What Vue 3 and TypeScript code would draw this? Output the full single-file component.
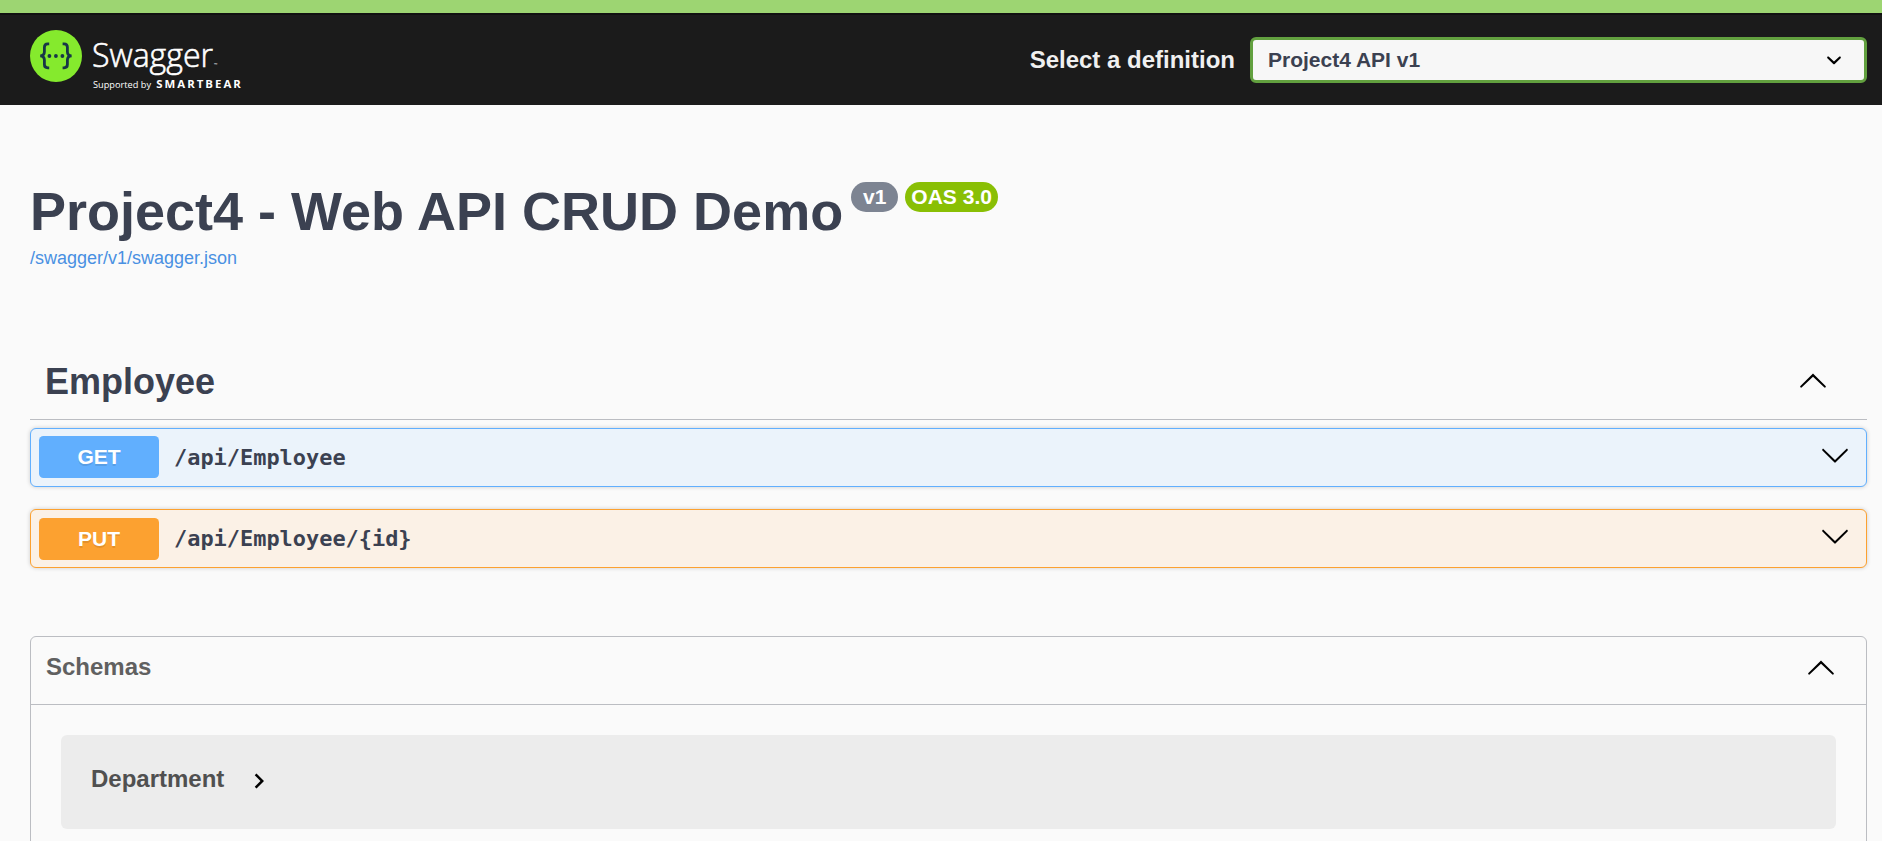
<script setup lang="ts">
import { ref } from 'vue'

interface Operation {
  method: string
  path: string
}

const operations: Operation[] = [
  { method: 'GET', path: '/api/Employee' },
  { method: 'PUT', path: '/api/Employee/{id}' },
]
const schemas: string[] = ['Department']
const definition = ref('Project4 API v1')

const arrowUp =
  'M17.418 14.908c.272.268.709.268.979 0s.271-.701 0-.969l-7.908-7.83c-.27-.268-.707-.268-.979 0l-7.908 7.83c-.27.268-.27.701 0 .969s.709.268.979 0L10 7.767z'
const arrowDown =
  'M17.418 6.109c.272-.268.709-.268.979 0s.271.701 0 .969l-7.908 7.83c-.27.268-.707.268-.979 0l-7.908-7.83c-.27-.268-.27-.701 0-.969s.709-.268.979 0L10 13.25z'
</script>

<template>
  <div class="page">
    <div class="accent"></div>
    <header class="topbar">
      <svg class="logo" viewBox="0 0 214 64" width="214" height="64">
        <circle cx="26" cy="26" r="26" fill="#85ea2d" />
        <g fill="none" stroke="#173647" stroke-width="2.8">
          <path d="M19.2 13.9h-1.4q-3.4 0-3.4 3.3v4.6q0 4-4.2 4.1q4.2.2 4.2 4.2v4.5q0 3.2 3.4 3.2h1.4" />
          <path d="M32.6 13.9h1.4q3.4 0 3.4 3.3v4.6q0 4 4.2 4.1q-4.2.2-4.2 4.2v4.5q0 3.2-3.4 3.2h-1.4" />
        </g>
        <g fill="#173647">
          <circle cx="19.4" cy="26" r="1.9" />
          <circle cx="25.9" cy="26" r="1.9" />
          <circle cx="32.4" cy="26" r="1.9" />
        </g>
        <g fill="#fff">
          <text class="logo-name" x="62" y="36.8" textLength="121" lengthAdjust="spacingAndGlyphs">Swagger</text>
          <text class="logo-tm" x="184" y="36.3">™</text>
          <text class="logo-by" x="63" y="57.5" textLength="58" lengthAdjust="spacing">Supported by</text>
          <text class="logo-brand" x="126.3" y="57.5" textLength="84.5" lengthAdjust="spacing">SMARTBEAR</text>
        </g>
      </svg>
      <label class="picker">
        <span class="picker-label">Select a definition</span>
        <span class="select">
          <span>{{ definition }}</span>
          <svg viewBox="0 0 20 20" width="30" height="30">
            <path d="M13.418 7.859c.271-.268.709-.268.978 0 .27.268.272.701 0 .969l-3.908 3.83c-.27.268-.707.268-.979 0l-3.908-3.83c-.27-.267-.27-.701 0-.969.271-.268.709-.268.978 0L10 11z" />
          </svg>
        </span>
      </label>
    </header>

    <main class="content">
      <section class="info">
        <div class="title-row">
          <h1>Project4 - Web API CRUD Demo</h1>
          <span class="badge version">v1</span>
          <span class="badge oas">OAS 3.0</span>
        </div>
        <a class="spec-link">/swagger/v1/swagger.json</a>
      </section>

      <section class="tag">
        <h2>Employee</h2>
        <svg viewBox="0 0 20 20" width="30" height="30"><path :d="arrowUp" /></svg>
      </section>

      <div v-for="op in operations" :key="op.path" class="operation" :class="op.method.toLowerCase()">
        <span class="method">{{ op.method }}</span>
        <span class="path">{{ op.path }}</span>
        <svg viewBox="0 0 20 20" width="30" height="30"><path :d="arrowDown" /></svg>
      </div>

      <section class="models">
        <div class="models-head">
          <h4>Schemas</h4>
          <svg viewBox="0 0 20 20" width="30" height="30"><path :d="arrowUp" /></svg>
        </div>
        <div v-for="name in schemas" :key="name" class="model">
          <span>{{ name }}</span>
          <svg viewBox="0 0 24 24" width="30" height="30">
            <path d="M10 6L8.59 7.41 13.17 12l-4.58 4.59L10 18l6-6z" />
          </svg>
        </div>
      </section>
    </main>
  </div>
</template>

<style>
html,
body {
  margin: 0;
  background: #fafafa;
}
</style>

<style scoped>
.page {
  height: 841px;
  overflow: hidden;
  background: #fafafa;
  color: #3b4151;
  font-family: 'Liberation Sans', Arial, sans-serif;
}
.page * {
  box-sizing: border-box;
}
svg {
  display: block;
  flex: none;
}
h1,
h2,
h4 {
  margin: 0;
}
.accent {
  height: 13px;
  background: #9dd572;
}
.topbar {
  display: flex;
  justify-content: space-between;
  height: 92px;
  padding: 0 15px 0 30px;
  border-top: 2px solid #111;
  background: #1b1b1b;
}
.logo {
  margin-top: 15px;
}
.logo-name {
  font: 300 33.5px 'Open Sans', sans-serif;
  stroke: #fff;
  stroke-width: 0.6px;
}
.logo-tm {
  font: 4.5px 'Open Sans', sans-serif;
}
.logo-by {
  font: 9.2px 'Open Sans', sans-serif;
}
.logo-brand {
  font: 700 11.4px 'Open Sans', sans-serif;
}
.picker {
  display: flex;
  align-items: center;
  gap: 15px;
  font-weight: 700;
}
.picker-label {
  color: #f0f0f0;
  font-size: 24px;
}
.select {
  display: flex;
  align-items: center;
  justify-content: space-between;
  width: 617px;
  height: 46px;
  padding: 0 15px;
  border: 3px solid #62a03f;
  border-radius: 6px;
  background: #f7f7f7;
  font-size: 21px;
}
.content {
  padding: 0 15px 0 30px;
}
.info {
  padding-top: 76px;
}
.title-row {
  display: flex;
  align-items: flex-start;
  height: 65px;
}
h1 {
  font-size: 54px;
  line-height: 60px;
}
.badge {
  height: 30px;
  margin-top: 1px;
  border-radius: 15px;
  color: #fff;
  font-size: 21px;
  font-weight: 700;
  line-height: 29px;
  text-align: center;
}
.version {
  width: 47px;
  margin-left: 8px;
  background: #7d8492;
}
.oas {
  width: 93px;
  margin-left: 7px;
  background: #89bf04;
}
.spec-link {
  display: block;
  color: #4990e2;
  font-size: 18px;
  line-height: 24px;
}
.tag {
  display: flex;
  align-items: center;
  justify-content: space-between;
  height: 78px;
  margin: 72px 0 8px;
  padding: 0 39px 0 15px;
  border-bottom: 1px solid #bbbdc2;
}
.tag svg {
  margin-bottom: 2px;
}
h2 {
  padding-top: 2px;
  font-size: 36px;
  line-height: 42px;
}
.operation {
  display: flex;
  align-items: center;
  height: 59px;
  margin-bottom: 22px;
  padding: 0 16px 0 8px;
  border: 1px solid;
  border-radius: 6px;
  box-shadow: 0 0 4.5px rgba(0, 0, 0, 0.19);
}
.operation svg {
  margin-left: auto;
  margin-top: -5px;
}
.get {
  border-color: #61affe;
  background: #ebf3fb;
}
.put {
  border-color: #fca130;
  background: #fbf1e6;
}
.method {
  width: 120px;
  height: 42px;
  border-radius: 4.5px;
  color: #fff;
  font-size: 21px;
  font-weight: 700;
  line-height: 42px;
  text-align: center;
  text-shadow: 0 1.5px 0 rgba(0, 0, 0, 0.1);
}
.get .method {
  margin-top: -2px;
  background: #61affe;
}
.put .method {
  background: #fca130;
}
.path {
  margin-left: 15px;
  font: 700 21.93px/30px 'DejaVu Sans Mono', monospace;
}
.put .path {
  margin-top: 1px;
}
.models {
  height: 300px;
  margin-top: 68px;
  border: 1px solid #bbbdc2;
  border-radius: 6px;
}
.models-head {
  display: flex;
  align-items: center;
  justify-content: space-between;
  height: 68px;
  padding: 0 30px 7px 15px;
  border-bottom: 1px solid #bbbdc2;
}
h4 {
  color: #606060;
  font-size: 24px;
}
.model {
  display: flex;
  align-items: center;
  height: 94px;
  margin: 30px;
  padding: 0 30px 7px;
  border-radius: 6px;
  background: #ececec;
  color: #505050;
  font-size: 24px;
  font-weight: 700;
}
.model svg {
  margin: 5px 0 0 20px;
}
</style>
